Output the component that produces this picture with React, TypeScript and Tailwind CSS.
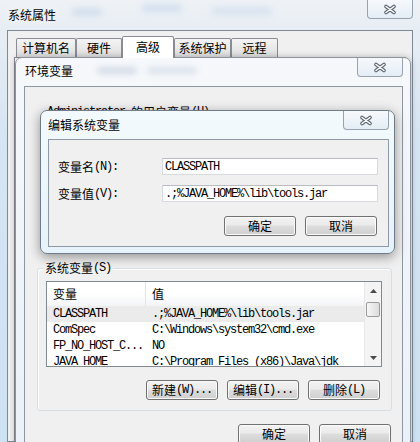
import type { ReactNode } from "react";

// half-width latin text, roughly SimSun's 6px cell
const mono = "font-['Liberation_Mono',monospace] text-[12px] tracking-[-1.2px] whitespace-pre";

function Btn({ children }: { children: ReactNode }) {
  return (
    <div className="flex h-[20px] w-[72px] items-center justify-center rounded-[3px] border border-[#707070] bg-[linear-gradient(#f2f2f2_0%,#ebebeb_45%,#dddddd_50%,#cfcfcf_100%)] leading-[14px] shadow-[inset_0_0_0_1px_#fcfcfc]">
      {children}
    </div>
  );
}

function CloseBtn() {
  return (
    <div className="ml-auto flex h-[19px] w-[46px] shrink-0 items-center justify-center rounded-b-[4px] border border-t-0 border-[#98a2ae] bg-[linear-gradient(#f6f9fc,#e4edf5)]">
      <svg width="14" height="11" viewBox="0 0 14 11">
        <path d="M3 2.5L11 8.5M11 2.5L3 8.5" stroke="#5d6673" strokeWidth="3.6" strokeLinecap="round" fill="none" />
        <path d="M3 2.5L11 8.5M11 2.5L3 8.5" stroke="#ffffff" strokeWidth="1.5" strokeLinecap="round" fill="none" />
      </svg>
    </div>
  );
}

function Tab({ label, w, active }: { label: string; w: string; active?: boolean }) {
  return active ? (
    <div className={`relative z-10 -mb-[1px] flex h-[22px] ${w} items-center justify-center rounded-t-[2px] border border-b-0 border-[#898c95] bg-white pb-[2px]`}>
      {label}
    </div>
  ) : (
    <div className={`flex h-[19px] ${w} items-center justify-center rounded-t-[2px] border border-b-0 border-[#898c95] bg-[linear-gradient(#f4f4f4,#dedede)]`}>
      {label}
    </div>
  );
}

const rows = [
  { name: "CLASSPATH", value: ".;%JAVA_HOME%\\lib\\tools.jar", selected: true },
  { name: "ComSpec", value: "C:\\Windows\\system32\\cmd.exe" },
  { name: "FP_NO_HOST_C...", value: "NO" },
  { name: "JAVA_HOME", value: "C:\\Program Files (x86)\\Java\\jdk" },
];

export default function App() {
  return (
    <div className="relative h-[442px] w-[420px] overflow-hidden bg-[linear-gradient(180deg,#eef2f6_0px,#e7edf4_30px,#d5e5f3_140px,#cde2f3_100%)] font-['Noto_Sans_CJK_SC',sans-serif] text-[12px] leading-[14px] text-black">
      {/* 系统属性 */}
      <div className="flex h-full flex-col px-[7px]">
        <div className="flex h-[30px] shrink-0 items-start">
          <span className="pl-[1px] pt-[8px] [text-shadow:0_0_8px_#fff]">系统属性</span>
          <span className="ml-[16px] mt-[8px] h-[8px] w-[30px] rounded-full bg-[#b9cce4] opacity-50 blur-[3px]" />
          <span className="ml-[40px] mt-[4px] h-[8px] w-[40px] rounded-full bg-[#bccfe6] opacity-50 blur-[3px]" />
          <span className="ml-[30px] mt-[7px] h-[8px] w-[60px] rounded-full bg-[#bccfe6] opacity-40 blur-[3px]" />
          <CloseBtn />
        </div>
        <div className="flex flex-1 flex-col border border-[#7f8995] bg-[#f0f0f0] px-[6px]">
          <div className="mt-[4px] flex h-[22px] items-end pl-[2px]">
            <Tab label="计算机名" w="w-[60px]" />
            <Tab label="硬件" w="w-[46px]" />
            <Tab label="高级" w="w-[52px]" active />
            <Tab label="系统保护" w="w-[57px]" />
            <Tab label="远程" w="w-[47px]" />
          </div>
          <div className="flex-1 border border-[#898c95] bg-white" />
        </div>
      </div>

      {/* 环境变量 */}
      <div className="absolute left-[15px] top-[57px] flex h-[400px] w-[396px] flex-col rounded-t-[7px] border border-[#8b939d] bg-[linear-gradient(180deg,#f6f8fb,#eaf1f8)] pl-[8px] pr-[7px] shadow-[0_0_6px_rgba(0,0,0,0.25)]">
        <div className="flex h-[28px] shrink-0 items-start">
          <span className="pl-[1px] pt-[6px] [text-shadow:0_0_8px_#fff]">环境变量</span>
          <span className="ml-[24px] mt-[9px] h-[7px] w-[40px] rounded-full bg-[#9fb0c6] opacity-40 blur-[3px]" />
          <span className="ml-[10px] mt-[9px] h-[7px] w-[50px] rounded-full bg-[#9fb0c6] opacity-30 blur-[3px]" />
          <CloseBtn />
        </div>
        <div className="flex flex-1 flex-col border border-[#8d97a3] bg-[#f0f0f0]">
          <div className="mt-[18px] flex pl-[22px] leading-[14px]">
            <span className={mono}>Administrator </span>
            <span>的用户变量</span>
            <span className={mono}>(U)</span>
          </div>

          {/* 系统变量 */}
          <div className="ml-[12px] mr-[10px] mt-[149px] flex flex-col rounded-[3px] border border-[#d5dfe5] pb-[10px] pl-[8px] pr-[9px] shadow-[inset_1px_1px_0_#fff]">
            <div className="-ml-[3px] -mt-[7px] flex self-start bg-[#f0f0f0] px-[2px] leading-[12px]">
              <span>系统变量</span>
              <span className={mono}>(S)</span>
            </div>
            <div className="mt-[7px] flex h-[86px] border border-[#828790] bg-white">
              <div className="flex flex-1 flex-col overflow-hidden">
                <div className="flex h-[24px] shrink-0 bg-[linear-gradient(#ffffff_0%,#ffffff_50%,#f3f4f6_100%)]">
                  <div className="flex w-[99px] items-center border-r border-[#e3e5e8] pl-[6px]">变量</div>
                  <div className="flex items-center pl-[6px]">值</div>
                </div>
                {rows.map((r) => (
                  <div key={r.name} className={`flex h-[16px] shrink-0 items-center ${r.selected ? "bg-[#ebebeb]" : ""}`}>
                    <span className={`w-[99px] pl-[6px] ${mono}`}>{r.name}</span>
                    <span className={`pl-[6px] ${mono}`}>{r.value}</span>
                  </div>
                ))}
              </div>
              <div className="flex w-[17px] shrink-0 flex-col border-l border-[#e8e8e8] bg-[#f4f4f4]">
                <div className="flex h-[17px] items-center justify-center">
                  <svg width="7" height="4" viewBox="0 0 7 4">
                    <path d="M0 4L3.5 0L7 4Z" fill="#4a4a4a" />
                  </svg>
                </div>
                <div className="mx-[1px] mt-[3px] h-[15px] rounded-[2px] border border-[#9b9b9b] bg-[linear-gradient(90deg,#f7f7f7,#dcdcdc)]" />
                <div className="flex-1" />
                <div className="flex h-[17px] items-center justify-center">
                  <svg width="7" height="4" viewBox="0 0 7 4">
                    <path d="M0 0L3.5 4L7 0Z" fill="#4a4a4a" />
                  </svg>
                </div>
              </div>
            </div>
            <div className="mt-[13px] flex justify-end gap-[9px] pr-[2px]">
              <Btn>
                <span>新建</span>
                <span className={mono}>(W)...</span>
              </Btn>
              <Btn>
                <span>编辑</span>
                <span className={mono}>(I)...</span>
              </Btn>
              <Btn>
                <span>删除</span>
                <span className={mono}>(L)</span>
              </Btn>
            </div>
          </div>

          <div className="mt-[13px] flex justify-end gap-[9px] pr-[11px]">
            <Btn>确定</Btn>
            <Btn>取消</Btn>
          </div>
        </div>
      </div>

      {/* 编辑系统变量 */}
      <div className="absolute left-[40px] top-[110px] flex h-[144px] w-[355px] flex-col rounded-[7px] border border-[#6f7b88] bg-[linear-gradient(180deg,#f3fafd,#e5f3fa)] pb-[6px] pl-[7px] pr-[5px] shadow-[0_3px_12px_rgba(0,0,0,0.4)]">
        <div className="flex h-[28px] shrink-0 items-start">
          <span className="pt-[7px] [text-shadow:0_0_8px_#fff]">编辑系统变量</span>
          <CloseBtn />
        </div>
        <div className="flex flex-1 flex-col border border-[#8e99a5] bg-[#f0f0f0]">
          <div className="mt-[18px] flex h-[17px] items-center">
            <div className="flex w-[113px] pl-[9px]">
              <span>变量名</span>
              <span className={mono}>(N):</span>
            </div>
            <div className="flex h-[17px] w-[216px] items-center border border-[#d6d9de] border-t-[#b9bdc3] bg-white pl-[2px]">
              <span className={mono}>CLASSPATH</span>
            </div>
          </div>
          <div className="mt-[10px] flex h-[17px] items-center">
            <div className="flex w-[113px] pl-[9px]">
              <span>变量值</span>
              <span className={mono}>(V):</span>
            </div>
            <div className="flex h-[17px] w-[216px] items-center border border-[#d6d9de] border-t-[#b9bdc3] bg-white pl-[2px]">
              <span className={mono}>.;%JAVA_HOME%\lib\tools.jar</span>
            </div>
          </div>
          <div className="mt-[14px] flex justify-end gap-[9px] pr-[11px]">
            <Btn>确定</Btn>
            <Btn>取消</Btn>
          </div>
        </div>
      </div>
    </div>
  );
}
